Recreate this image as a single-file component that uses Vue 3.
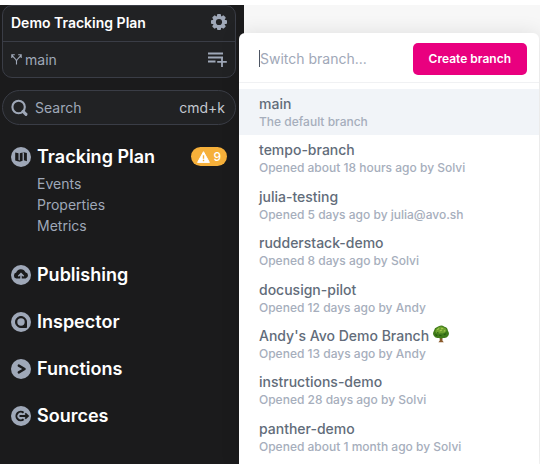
<script setup>
import { ref } from 'vue'

const query = ref('')
const views = ['Events', 'Properties', 'Metrics']
const sections = [
  { name: 'Publishing', icon: 'cloud' },
  { name: 'Inspector', icon: 'inspect' },
  { name: 'Functions', icon: 'chevron' },
  { name: 'Sources', icon: 'source' },
]
const branches = [
  { name: 'main', note: 'The default branch', active: true },
  { name: 'tempo-branch', note: 'Opened about 18 hours ago by Solvi' },
  { name: 'julia-testing', note: 'Opened 5 days ago by julia@avo.sh' },
  { name: 'rudderstack-demo', note: 'Opened 8 days ago by Solvi' },
  { name: 'docusign-pilot', note: 'Opened 12 days ago by Andy' },
  { name: "Andy's Avo Demo Branch", note: 'Opened 13 days ago by Andy', tree: true },
  { name: 'instructions-demo', note: 'Opened 28 days ago by Solvi' },
  { name: 'panther-demo', note: 'Opened about 1 month ago by Solvi' },
]
</script>

<template>
  <div class="page">
    <aside class="sidebar">
      <div class="workspace">
        <div class="row title-row">
          <h1>Demo Tracking Plan</h1>
          <button aria-label="Settings">
            <svg width="18" height="18" viewBox="0 0 18 18">
              <g fill="#9fa8b8">
                <rect v-for="a in [0, 45, 90, 135]" :key="a" x="7" y="1" width="4" height="16" rx="1" :transform="`rotate(${a} 9 9)`" />
                <circle cx="9" cy="9" r="6.3" />
              </g>
              <circle cx="9" cy="9" r="3.1" fill="#212224" />
            </svg>
          </button>
        </div>
        <div class="row">
          <a href="#" class="branch">
            <svg width="11" height="11" viewBox="0 0 11 11" fill="none" stroke="#9fa8b8" stroke-width="1.1">
              <path d="M5.5 10.5V7.2C5.5 5 2.7 4.4 1 1M5.5 7.2C5.5 5 8.3 4.4 10 1M.8 4V.8H3.8M7.2.8h3V4" />
            </svg>
            <span>main</span>
          </a>
          <button aria-label="Add to branch">
            <svg width="20" height="16" viewBox="0 0 20 16" fill="none" stroke="#9fa8b8" stroke-width="1.8">
              <path d="M1 1.5h15M1 5.5h15M1 9.5h7.5M15 5v10M10.2 9.8h9.6" />
            </svg>
          </button>
        </div>
      </div>

      <button class="search">
        <svg width="18" height="18" viewBox="0 0 18 18" fill="none" stroke="#9fa8b8">
          <circle cx="7.6" cy="8" r="6.2" stroke-width="2.1" />
          <path d="M12 12.4l3 3" stroke-width="3" stroke-linecap="round" />
        </svg>
        <span>Search</span>
        <kbd>cmd+k</kbd>
      </button>

      <nav>
        <div class="section">
          <a href="#" class="heading">
            <svg width="20" height="20" viewBox="0 0 20 20">
              <circle cx="10" cy="10" r="10" fill="#9fa8b8" />
              <path d="M4.2 5.6l3.3.6v8.2l-3.3-.8zM7.5 13l1.3.4V6.2l2.8-.8v8.4l-2.8.9-1.3-.4zM11.6 5.4l1.3.3v7.6l3 .9V6l-3-.8-1.3.2z" fill="#1b1b1c" />
            </svg>
            <span>Tracking Plan</span>
          </a>
          <span class="badge">
            <svg width="13" height="12" viewBox="0 0 13 12">
              <path d="M6.5.7L12.4 11.4H.6z" fill="#fff" stroke="#fff" stroke-linejoin="round" />
              <path d="M6.5 4.2v3.5M6.5 8.8v1.4" stroke="#f6b03a" stroke-width="1.4" />
            </svg>
            <span>9</span>
          </span>
        </div>
        <ul class="views">
          <li v-for="v in views" :key="v"><a href="#">{{ v }}</a></li>
        </ul>
        <div class="sections">
          <a v-for="s in sections" :key="s.name" href="#" class="heading">
            <svg width="20" height="20" viewBox="0 0 20 20" fill="none" stroke="#1b1b1c">
              <circle cx="10" cy="10" r="10" fill="#9fa8b8" stroke="none" />
              <template v-if="s.icon === 'cloud'">
                <path d="M5.3 13.6A3.1 3.1 0 0 1 5.2 7.6 4.9 4.9 0 0 1 14.4 7.2 3.3 3.3 0 0 1 14.6 13.6z" fill="#1b1b1c" stroke="none" />
                <path d="M10 15V9M7.3 11.3L10 8.6l2.7 2.7" stroke="#9fa8b8" stroke-width="1.5" />
              </template>
              <template v-else-if="s.icon === 'inspect'">
                <path d="M15.5 15.5H10A5.5 5.5 0 1 1 15.5 10z" fill="#1b1b1c" />
                <circle cx="10" cy="10" r="3.7" fill="#9fa8b8" stroke="none" />
              </template>
              <path v-else-if="s.icon === 'chevron'" d="M7.8 6.6L13.6 10l-5.8 3.4" stroke-width="2.4" stroke-linecap="round" stroke-linejoin="round" />
              <template v-else>
                <path d="M12.6 6.8A4.3 4.3 0 1 0 12.6 13.2" stroke-width="2" />
                <path d="M8.5 10H16.5M14.2 7.3L17 10l-2.8 2.7" stroke-width="1.8" />
              </template>
            </svg>
            <span>{{ s.name }}</span>
          </a>
        </div>
      </nav>
    </aside>

    <main class="content"></main>

    <section class="popover" aria-label="Branches">
      <div class="switcher">
        <div class="field">
          <input v-model="query" type="text" placeholder="Switch branch..." aria-label="Switch branch" />
        </div>
        <button class="create">Create branch</button>
      </div>
      <ul class="list">
        <li v-for="b in branches" :key="b.name" :class="{ active: b.active }">
          <a href="#">
            <span class="name">{{ b.name }}
              <svg v-if="b.tree" class="tree" width="18" height="19" viewBox="0 0 18 19">
                <path d="M7.8 12h2.6l.2 4.6 1.4 1.6H6.2l1.4-1.6z" fill="#8a5a2c" />
                <path d="M5 2.2Q9-1 12.6 1.8 16 2.5 16.3 6 18.4 9 16.5 11.6 14.5 14.6 11 13.6 9 15 7 13.6 3.2 14.5 1.6 11.6-.4 9 1.6 6 2 3 5 2.2z" fill="#3f7a19" />
                <path d="M5.4 3Q9 .2 12 2.7q3 .6 2.8 3.7-1.8 3-5.8 2.4Q4.6 10.2 3 7.2 3.1 4 5.4 3z" fill="#6ba02e" />
                <path d="M5 5.2l2-1.6M9 3.4l2.4.5M7.6 6.3l2.5-1M12 6.7l1.3-1" stroke="#a5ca4e" stroke-width="1.1" />
                <path d="M3 10l2 1.4M7 10.8l2.6.6M12 10.2l2.2-1M5 7.8l1.4.8" stroke="#265b10" stroke-width="1.2" />
              </svg>
            </span>
            <span class="note">{{ b.note }}</span>
          </a>
        </li>
      </ul>
    </section>
  </div>
</template>

<style>
body {
  margin: 0;
  background: #fff;
}
</style>

<style scoped>
* {
  box-sizing: border-box;
}
.page {
  position: relative;
  display: flex;
  min-height: 100vh;
  padding-top: 5px;
  font-family: Inter, "Liberation Sans", sans-serif;
}
a {
  color: inherit;
  text-decoration: none;
}
button {
  border: 0;
  padding: 0;
  background: none;
  font: inherit;
  color: inherit;
}
ul {
  list-style: none;
  margin: 0;
  padding: 0;
}
svg {
  display: block;
  flex: none;
}
.sidebar {
  flex: none;
  width: 244px;
  padding: 0 8px 0 2px;
  background: #1b1b1c;
  color: #9fa8b8;
}
.workspace {
  border: 1px solid #3a3d46;
  border-radius: 10px;
  background: #212224;
}
.row {
  display: flex;
  align-items: center;
  justify-content: space-between;
  height: 35px;
  padding: 0 8px;
}
.title-row {
  height: 36px;
  padding: 0 7px 4px 8px;
  border-bottom: 1px solid #3a3d46;
}
h1 {
  margin: 0;
  padding-top: 2px;
  font-size: 14px;
  font-weight: 600;
  color: #fff;
}
.branch {
  display: flex;
  align-items: center;
  gap: 3px;
  font-size: 14px;
}
.search {
  display: flex;
  align-items: center;
  gap: 6px;
  width: 100%;
  height: 35px;
  margin-top: 12px;
  padding: 0 10px 0 8px;
  border: 1px solid #3a3d46;
  border-radius: 18px;
  background: #212224;
  font-size: 14px;
}
.search kbd {
  margin-left: auto;
  font: inherit;
  color: #c3c8d0;
}
nav {
  padding: 20px 9px 0;
}
.section {
  display: flex;
  align-items: center;
  justify-content: space-between;
}
.heading {
  display: flex;
  align-items: center;
  gap: 6px;
  font-size: 18px;
  line-height: 23px;
  font-weight: 600;
  color: #fff;
}
.badge {
  display: flex;
  align-items: center;
  gap: 3px;
  height: 19px;
  padding: 0 6px;
  border-radius: 10px;
  background: #f6b03a;
  color: #fff;
  font-size: 12px;
  font-weight: 500;
}
.views {
  padding: 5px 0 0 26px;
  font-size: 14px;
  line-height: 21px;
}
.sections {
  display: grid;
  gap: 24px;
  padding-top: 27px;
}
.content {
  flex: 1;
  background: #f7f7f7;
}
.popover {
  position: absolute;
  top: 33px;
  right: 1px;
  bottom: 0;
  left: 239px;
  display: flex;
  flex-direction: column;
  border-radius: 6px 6px 0 0;
  background: #fff;
  box-shadow: 0 0 20px rgba(0, 0, 0, 0.1);
}
.switcher {
  display: flex;
  align-items: center;
  gap: 12px;
  height: 50px;
  padding: 2px 12px 0 20px;
  border-bottom: 1px solid #f0f1f3;
}
.field {
  flex: 1;
  min-width: 0;
  border-left: 1px solid #4d5563;
}
.field input {
  display: block;
  width: 100%;
  height: 17px;
  padding: 0;
  border: 0;
  outline: 0;
  background: none;
  font: inherit;
  font-size: 14px;
  color: #5a6473;
}
.field input::placeholder {
  color: #9fa8b8;
  opacity: 1;
}
.create {
  height: 32px;
  padding: 0 16px;
  border-radius: 5px;
  background: #e9007f;
  color: #fff;
  font-size: 12px;
  font-weight: 600;
}
.list {
  flex: 1;
  display: grid;
  grid-auto-rows: 1fr;
  padding: 6px 0 4px;
}
.list li {
  padding: 6px 20px 0;
}
.list .active {
  background: #f1f4f8;
}
.name,
.note {
  display: block;
}
.name {
  font-size: 14px;
  line-height: 18px;
  font-weight: 500;
  color: #626c7a;
}
.note {
  font-size: 12px;
  line-height: 17px;
  font-weight: 500;
  color: #a6aebc;
}
.tree {
  display: inline-block;
  height: 18px;
  margin: -2px 0 2px -1px;
  vertical-align: bottom;
}
</style>
